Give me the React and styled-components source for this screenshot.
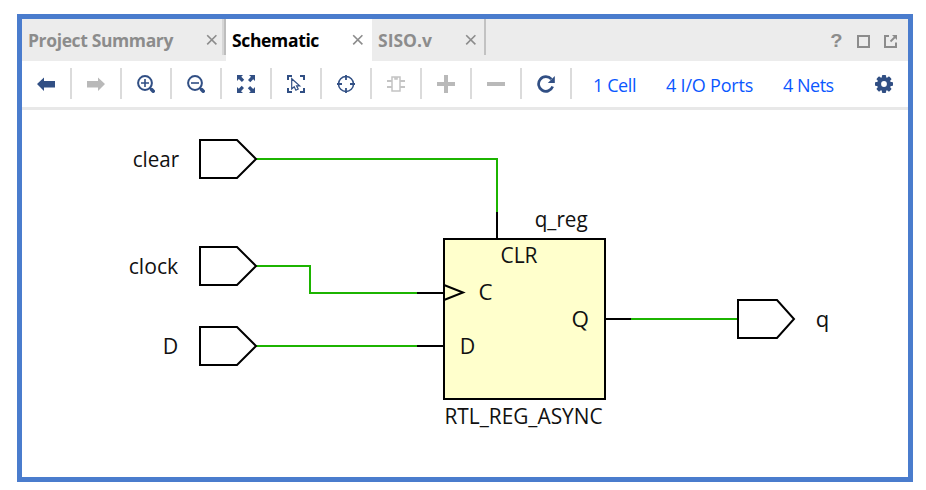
import React from 'react';
import styled, { createGlobalStyle } from 'styled-components';

const NAVY = '#314f84';
const GREY = '#b9b9b9';
const GREEN = '#1cb400';

const GlobalStyle = createGlobalStyle`
  *, *::before, *::after { box-sizing: border-box; }
  body { margin: 0; background: #fff; font-family: 'Open Sans', 'Noto Sans', sans-serif; }
`;

const Page = styled.div`
  width: 926px;
  height: 490px;
  padding: 14px 13px 8px 17px;
  background: #fff;
`;

const Frame = styled.main`
  display: flex;
  flex-direction: column;
  width: 896px;
  height: 468px;
  border: 5px solid #4a7ccd;
  background: #fff;
`;

const TabBar = styled.header`
  display: flex;
  flex: 0 0 42px;
  background: #ececec;
`;

const Tab = styled.div`
  display: flex;
  justify-content: space-between;
  width: ${(p) => p.$width}px;
  height: 42px;
  padding: 0 ${(p) => p.$end}px 0 6px;
  background: ${(p) => (p.$active ? '#fff' : 'transparent')};
  color: ${(p) => (p.$active ? '#000' : '#8c8c8c')};
  font-size: 17.5px;
  font-weight: 700;
  line-height: 43px;
  letter-spacing: ${(p) => p.$spacing}px;
  white-space: nowrap;
`;

const CloseIcon = styled.svg`
  flex: none;
  width: 12px;
  height: 12px;
  margin-top: 15px;
`;

const TabDivider = styled.div`
  width: ${(p) => (p.$wide ? 4 : 2)}px;
  height: 36px;
  background: ${(p) => (p.$wide ? 'linear-gradient(90deg, #d6d6d6 50%, #bdbdbd 50%)' : '#c2c2c2')};
`;

const WindowControls = styled.div`
  display: flex;
  align-items: center;
  gap: 14px;
  height: 42px;
  margin: 0 11px 0 auto;
  padding-top: 2px;
`;

const ControlIcon = styled.svg`
  width: 13px;
  height: 14px;
`;

const HelpMark = styled.span`
  width: 13px;
  font: 700 17.5px/24px 'Liberation Sans', sans-serif;
  text-align: center;
  color: #8c8c8c;
  transform: scaleX(1.15);
`;

const Toolbar = styled.nav`
  display: flex;
  flex: 0 0 49px;
  height: 49px;
  border-bottom: 3px solid #e8e8e8;
`;

const ToolCell = styled.div`
  display: flex;
  align-items: center;
  justify-content: center;
  width: 50px;
  height: 31px;
  margin-top: 7px;
  border-right: 2px solid #dbdbdb;
`;

const ToolIcon = styled.svg`
  width: 18px;
  height: 18px;
  margin-top: 1px;
`;

const Links = styled.div`
  display: flex;
  height: 46px;
  padding-left: 21px;
  font-size: 18px;
  line-height: 48px;
  color: #0a57ff;
  white-space: nowrap;
`;

const StatLink = styled.span`
  width: ${(p) => p.$width}px;
  letter-spacing: ${(p) => p.$spacing}px;
`;

const Settings = styled.div`
  height: 31px;
  margin: 13px 15px 0 auto;
`;

const Canvas = styled.svg`
  display: block;
  flex: none;
  width: 886px;
  height: 367px;
  font-family: 'Open Sans', 'Noto Sans', sans-serif;
  font-size: 21px;
  fill: #111;
`;

const Wire = styled.path`
  fill: none;
  stroke: ${(p) => (p.$pin ? '#000' : GREEN)};
  stroke-width: 2;
`;

const Shape = styled.path`
  fill: ${(p) => p.$fill || '#fff'};
  stroke: #000;
  stroke-width: 2;
`;

const Close = () => (
  <CloseIcon viewBox="0 0 12 12">
    <path d="M1.200 1.200l9.200 9.200M10.400 1.200l-9.200 9.200" stroke="#8c8c8c" strokeWidth="1.600" />
  </CloseIcon>
);

const Lens = ({ plus }) => (
  <>
    <circle cx="8" cy="8" r="6.900" fill="none" stroke={NAVY} strokeWidth="2" />
    <path d={plus ? 'M4 8h8M8 4v8' : 'M4 8h8'} stroke={NAVY} strokeWidth="1.600" />
    <path d="M12.500 12.500l1.800 1.800" stroke={NAVY} strokeWidth="2" />
    <path d="M14.600 14.600l1.600 1.600" stroke={NAVY} strokeWidth="3.600" strokeLinecap="round" />
  </>
);

const tools = [
  ['back', <path d="M0 9l7-6.500V6h11v6.500H7v3.500z" fill={NAVY} />],
  ['forward', <path d="M18 9l-7-6.500V6H0v6.500h11v3.500z" fill={GREY} />],
  ['zoom-in', <Lens plus />],
  ['zoom-out', <Lens />],
  ['fit', (
    <g fill={NAVY}>
      {[0, 90, 180, 270].map((a) => (
        <path key={a} transform={`rotate(${a} 9 9)`} d="M0 0h6L4.300 1.800l2.900 2.900-2.300 2.300-3.100-3L0 6z" />
      ))}
    </g>
  )],
  ['select-area', (
    <g fill="none" stroke={NAVY}>
      <path d="M1 5V1h4M13 1h4v4M17 13v4h-4M5 17H1v-4" strokeWidth="2" />
      <path d="M4.700 3.700v10.200l2.500-2.200 1.700 3.500 2.300-1.100-1.700-3.300h3.200z" strokeWidth="1.200" />
    </g>
  )],
  ['target', (
    <g fill="none" stroke={NAVY}>
      <circle cx="9" cy="9" r="7.500" strokeWidth="1.500" />
      <path d="M9 0v5M9 13v5M0 9h5M13 9h5" strokeWidth="1.800" />
    </g>
  )],
  ['cell', (
    <g fill="none" stroke="#c4c4c4">
      <path d="M0 6h5M0 12h5M13 6h5M13 12h5" strokeWidth="2" />
      <path d="M5 2h8v14H5zM8 2v2h2V2" strokeWidth="1.500" />
    </g>
  )],
  ['expand', <path d="M9 0v18M0 9h18" stroke={GREY} strokeWidth="4" />],
  ['collapse', <path d="M0 9h18" stroke={GREY} strokeWidth="4" />],
  ['reload', (
    <>
      <path d="M14.400 4.200A7.300 7.300 0 1 0 15.700 11.600" fill="none" stroke={NAVY} strokeWidth="2.700" />
      <path d="M17.800 1v7h-7z" fill={NAVY} />
    </>
  )],
];

const ports = [
  'M200 140H237L256 159L237 178H200Z',
  'M200 247H237L256 266L237 285H200Z',
  'M200 327H237L256 346L237 365H200Z',
  'M738 300H777L794 319L777 338H738Z',
];

const nets = [
  'M256 159H497V212',
  'M256 266H310V293H417',
  'M256 346H417',
  'M631 319H738',
];

const pins = ['M497 212V239', 'M417 293H444', 'M417 346H444', 'M605 319H631'];

// [text, x, baseline, advance width]
const labels = [
  ['clear', 132.7, 167.4, 46.5],
  ['clock', 128.7, 274.4, 49.5],
  ['D', 162.7, 354.4, 15.5],
  ['q_reg', 534.7, 227.4, 53],
  ['CLR', 500.5, 263.4, 37],
  ['C', 478.5, 300.4, 14],
  ['D', 459.7, 354.4, 15.5],
  ['Q', 571.5, 327.4, 17.5],
  ['RTL_REG_ASYNC', 444.5, 424.4, 158],
  ['q', 815.7, 327.4, 13.5],
];

export default function App() {
  return (
    <>
      <GlobalStyle />
      <Page>
        <Frame>
          <TabBar>
            <Tab $width={200} $end={4} $spacing={-0.37}>Project Summary<Close /></Tab>
            <TabDivider $wide />
            <Tab $active $width={146} $end={8} $spacing={-0.35}>Schematic<Close /></Tab>
            <Tab $width={112} $end={7} $spacing={0}>SISO.v<Close /></Tab>
            <TabDivider />
            <WindowControls>
              <HelpMark>?</HelpMark>
              <ControlIcon viewBox="0 0 13 14">
                <path d="M1 2h11v11H1z" fill="none" stroke="#8c8c8c" strokeWidth="2" />
              </ControlIcon>
              <ControlIcon viewBox="0 0 13 14">
                <path d="M5 2H1v11h11V8.500" fill="none" stroke="#8c8c8c" strokeWidth="2" />
                <path d="M6.500 7.500l4.500-4.500" stroke="#8c8c8c" strokeWidth="1.800" />
                <path d="M8 1h5v5z" fill="#8c8c8c" />
              </ControlIcon>
            </WindowControls>
          </TabBar>
          <Toolbar>
            {tools.map(([name, icon]) => (
              <ToolCell key={name}>
                <ToolIcon viewBox="0 0 18 18">{icon}</ToolIcon>
              </ToolCell>
            ))}
            <Links>
              <StatLink $width={73} $spacing={-0.4}>1 Cell</StatLink>
              <StatLink $width={117} $spacing={-0.2}>4 I/O Ports</StatLink>
              <StatLink $width={60} $spacing={-0.5}>4 Nets</StatLink>
            </Links>
            <Settings>
              <ToolIcon viewBox="0 0 18 18">
                <g fill={NAVY}>
                  {[0, 45, 90, 135].map((a) => (
                    <rect key={a} x="6.900" y="0" width="4.200" height="18" rx="1" transform={`rotate(${a} 9 9)`} />
                  ))}
                  <circle cx="9" cy="9" r="7" />
                </g>
                <circle cx="9" cy="9" r="2.900" fill="#fff" />
              </ToolIcon>
            </Settings>
          </Toolbar>
          <Canvas viewBox="22 110 886 367">
            {nets.map((d) => <Wire key={d} d={d} />)}
            {ports.map((d) => <Shape key={d} d={d} />)}
            <Shape d="M444 239H605V399H444Z" $fill="#ffffcc" />
            <Shape d="M444 285L463 292.500L444 300" $fill="none" />
            {pins.map((d) => <Wire key={d} d={d} $pin />)}
            {labels.map(([text, x, y, w]) => (
              <text key={`${text}${x}`} x={x} y={y} textLength={w} lengthAdjust="spacingAndGlyphs">{text}</text>
            ))}
          </Canvas>
        </Frame>
      </Page>
    </>
  );
}
